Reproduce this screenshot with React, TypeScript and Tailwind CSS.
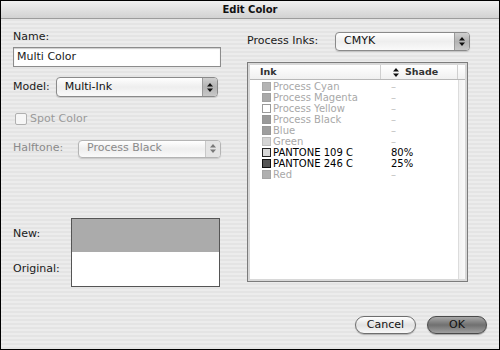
import React from 'react';

const font = { fontFamily: '"DejaVu Sans", "Liberation Sans", sans-serif' };

function Arrows({ dim = false }: { dim?: boolean }) {
  return (
    <svg width="6" height="9" viewBox="0 0 6 9" className={dim ? 'opacity-50' : ''}>
      <path d="M3 0 L6 3.5 L0 3.5 Z M0 5.5 L6 5.5 L3 9 Z" fill="#111" />
    </svg>
  );
}

function Popup({ value, w, h = 'h-[19px]', disabled = false }: { value: string; w: string; h?: string; disabled?: boolean }) {
  return (
    <div
      className={`${w} ${h} flex rounded-[4px] border ${disabled ? 'border-[#b4b4b4]' : 'border-[#8a8a8a]'} bg-linear-to-b from-[#ffffff] via-[#eeeeee] to-[#fafafa] shadow-[0_1px_1px_rgba(0,0,0,0.15)] overflow-hidden`}
    >
      <div className={`flex-1 flex items-center pl-[8px] text-[11px] ${disabled ? 'text-[#8a8a8a]' : 'text-[#111]'}`}>{value}</div>
      <div
        className={`w-[15px] flex items-center justify-center border-l ${disabled ? 'border-[#c8c8c8] bg-[#e4e4e4]' : 'border-[#9a9a9a] bg-linear-to-b from-[#cfcfcf] via-[#b3b3b3] to-[#c8c8c8]'}`}
      >
        <Arrows dim={disabled} />
      </div>
    </div>
  );
}

type Ink = { name: string; swatch: string; border: string; shade: string; active?: boolean };

const inks: Ink[] = [
  { name: 'Process Cyan', swatch: 'bg-[#b4b4b4]', border: 'border-[#a8a8a8]', shade: '–' },
  { name: 'Process Magenta', swatch: 'bg-[#a9a9a9]', border: 'border-[#a0a0a0]', shade: '–' },
  { name: 'Process Yellow', swatch: 'bg-[#ffffff]', border: 'border-[#9a9a9a]', shade: '–' },
  { name: 'Process Black', swatch: 'bg-[#9a9a9a]', border: 'border-[#959595]', shade: '–' },
  { name: 'Blue', swatch: 'bg-[#9e9e9e]', border: 'border-[#979797]', shade: '–' },
  { name: 'Green', swatch: 'bg-[#d4d4d4]', border: 'border-[#bdbdbd]', shade: '–' },
  { name: 'PANTONE 109 C', swatch: 'bg-[#d6d6d6]', border: 'border-[#222]', shade: '80%', active: true },
  { name: 'PANTONE 246 C', swatch: 'bg-[#555555]', border: 'border-[#111]', shade: '25%', active: true },
  { name: 'Red', swatch: 'bg-[#b0b0b0]', border: 'border-[#a5a5a5]', shade: '–' },
];

export default function App() {
  return (
    <div style={font} className="w-[500px] h-[350px] border border-black flex flex-col bg-[repeating-linear-gradient(180deg,#ececec_0px,#ececec_2px,#e4e4e4_2px,#e4e4e4_4px)] text-[#1a1a1a]">
      {/* Title bar */}
      <div className="h-[18px] shrink-0 border-b border-[#9c9c9c] bg-linear-to-b from-[#f0f0f0] to-[#d2d2d2] flex items-center justify-center">
        <span className="text-[10px] font-bold text-[#111]">Edit Color</span>
      </div>

      <div className="flex-1 flex flex-col">
        <div className="flex pl-[12px] gap-[26px]">
          {/* Left column */}
          <div className="w-[208px] flex flex-col">
            <div className="mt-[11px] text-[11px] leading-[14px]">Name:</div>
            <div className="mt-[3px] h-[20px] border border-[#8c8c8c] bg-white shadow-[inset_0_1px_1px_rgba(0,0,0,0.2)] flex items-center pl-[3px] text-[11px]">
              Multi Color
            </div>
            <div className="mt-[10px] flex items-center gap-[6px]">
              <span className="text-[11px]">Model:</span>
              <Popup value="Multi-Ink" w="w-[162px]" h="h-[20px]" />
            </div>
            <div className="mt-[14px] flex items-center gap-[3px] pl-[2px]">
              <div className="w-[12px] h-[12px] rounded-[2px] border border-[#b0b0b0] bg-[#f6f6f6]" />
              <span className="text-[11px] text-[#9a9a9a]">Spot Color</span>
            </div>
            <div className="mt-[12px] flex items-center justify-between">
              <span className="text-[11px] text-[#8a8a8a]">Halftone:</span>
              <Popup value="Process Black" w="w-[143px]" h="h-[18px]" disabled />
            </div>
            <div className="mt-[60px] flex">
              <div className="w-[58px] flex flex-col text-[11px]">
                <div className="h-[34px] flex items-center">New:</div>
                <div className="h-[35px] flex items-center">Original:</div>
              </div>
              <div className="w-[149px] h-[69px] border border-[#555] flex flex-col">
                <div className="h-[33px] bg-[#ababab]" />
                <div className="flex-1 bg-white" />
              </div>
            </div>
          </div>

          {/* Right column */}
          <div className="w-[223px] flex flex-col">
            <div className="mt-[13px] flex items-center justify-between">
              <span className="text-[11px]">Process Inks:</span>
              <Popup value="CMYK" w="w-[135px]" />
            </div>
            <div className="mt-[11px] w-[221px] h-[220px] border border-[#7c7c7c] shadow-[inset_0_0_0_2px_#d8d8d8] p-[2px]">
              <div className="w-full h-full bg-white flex flex-col">
                <div className="h-[15px] flex border-b border-[#b8b8b8] bg-linear-to-b from-white to-[#f0f0f0] text-[9.5px] font-bold text-[#333]">
                  <div className="w-[131px] pl-[10px] flex items-center border-r border-[#cfcfcf]">Ink</div>
                  <div className="w-[77px] flex items-center pl-[12px] gap-[6px] border-r border-[#cfcfcf]">
                    <Arrows />
                    <span>Shade</span>
                  </div>
                  <div className="flex-1" />
                </div>
                <div className="flex-1 flex">
                  <div className="w-[208px] flex flex-col pt-[1px]">
                    {inks.map((ink) => (
                      <div key={ink.name} className="h-[11px] flex items-center text-[10px] leading-[11px]">
                        <div className="w-[131px] pl-[12px] flex items-center gap-[2px]">
                          <div className={`w-[9px] h-[9px] shrink-0 border ${ink.swatch} ${ink.border}`} />
                          <span className={ink.active ? 'text-black' : 'text-[#a8a8a8]'}>{ink.name}</span>
                        </div>
                        <span className={`pl-[10px] ${ink.active ? 'text-black' : 'text-[#c0c0c0]'}`}>{ink.shade}</span>
                      </div>
                    ))}
                  </div>
                  <div className="flex-1 border-l border-[#dcdcdc] bg-linear-to-r from-[#f2f2f2] to-[#fafafa]" />
                </div>
              </div>
            </div>
          </div>
        </div>

        {/* Buttons */}
        <div className="mt-auto pb-[15px] pr-[12px] flex justify-end gap-[11px]">
          <button className="w-[61px] h-[18px] rounded-full border border-[#6e6e6e] bg-linear-to-b from-[#ffffff] via-[#e2e2e2] to-[#f8f8f8] text-[11px] text-[#111] flex items-center justify-center shadow-[0_1px_1px_rgba(0,0,0,0.25)]">
            Cancel
          </button>
          <button className="w-[60px] h-[18px] rounded-full border border-[#4a4a4a] bg-linear-to-b from-[#a8a8a8] via-[#707070] to-[#a0a0a0] text-[11px] text-[#111] flex items-center justify-center shadow-[0_1px_1px_rgba(0,0,0,0.3)]">
            OK
          </button>
        </div>
      </div>
    </div>
  );
}
